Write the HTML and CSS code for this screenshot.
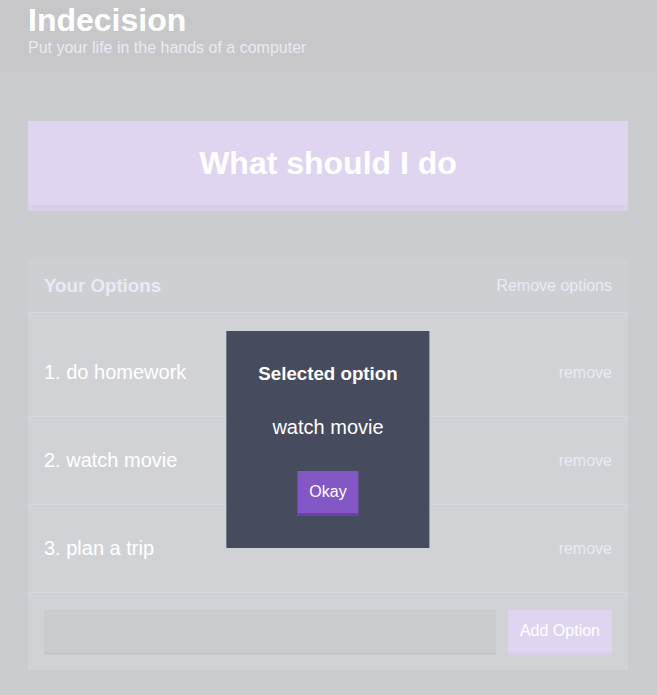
FILE: index.html
```html
<!DOCTYPE html>
<html lang="en">
<head>
<meta charset="utf-8">
<title>Indecision</title>
<link rel="stylesheet" href="styles.css">
</head>
<body>
<header class="header">
  <div class="container">
    <h1 class="header__title">Indecision</h1>
    <h2 class="header__subtitle">Put your life in the hands of a computer</h2>
  </div>
</header>
<main class="container">
  <button class="big-button">What should I do</button>
  <section class="widget">
    <div class="widget-header">
      <h3 class="widget-header__title">Your Options</h3>
      <button class="button--link">Remove options</button>
    </div>
    <div class="options">
      <div class="option">
        <p class="option__text">1. do homework</p>
        <button class="button--link">remove</button>
      </div>
      <div class="option">
        <p class="option__text">2. watch movie</p>
        <button class="button--link">remove</button>
      </div>
      <div class="option">
        <p class="option__text">3. plan a trip</p>
        <button class="button--link">remove</button>
      </div>
    </div>
    <form class="add-option">
      <input class="add-option__input" type="text" name="option">
      <button class="button" type="button">Add Option</button>
    </form>
  </section>
</main>
<div class="overlay">
  <div class="modal">
    <h3 class="modal__title">Selected option</h3>
    <p class="modal__body">watch movie</p>
    <button class="button">Okay</button>
  </div>
</div>
</body>
</html>
```
FILE: styles.css
```css
html, body {
  margin: 0;
  padding: 0;
  overflow: hidden;
}
body {
  background: #333745;
  font-family: "Liberation Sans", Arial, sans-serif;
  color: #ffffff;
  height: 695px;
  padding-right: 1px;
}
button, input {
  font-family: "Liberation Sans", Arial, sans-serif;
}
.container {
  max-width: 600px;
  margin: 0 auto;
}
.header {
  background: #20222b;
  padding: 2px 0 15px;
  margin-bottom: 49px;
}
.header__title {
  font-size: 32px;
  line-height: 37px;
  margin: 0;
  font-weight: bold;
}
.header__subtitle {
  color: #a5afd7;
  font-size: 16px;
  line-height: 18px;
  font-weight: 500;
  margin: 0;
}
.big-button {
  display: block;
  width: 100%;
  background: #8357c5;
  border: none;
  border-bottom: 6px solid #6a42a7;
  color: #ffffff;
  font-size: 32px;
  font-weight: bold;
  line-height: 36px;
  padding: 24px;
  margin: 0 0 48px;
}
.widget {
  background: #464b5e;
}
.widget-header {
  display: flex;
  justify-content: space-between;
  align-items: center;
  background: #3c4251;
  border-bottom: 1px solid #5d6480;
  padding: 17px 16px 16px;
}
.widget-header__title {
  color: #a5afd7;
  font-size: 18.72px;
  line-height: 20px;
  margin: 0;
}
.button--link {
  background: none;
  border: none;
  color: #a5afd7;
  font-size: 16px;
  padding: 0;
}
.options {
  padding-top: 16px;
}
.option {
  display: flex;
  justify-content: space-between;
  align-items: center;
  border-bottom: 1px solid #5d6480;
  padding: 32px 16px;
}
.option__text {
  color: #ffffff;
  font-size: 20px;
  line-height: 23px;
  margin: 0;
}
.add-option {
  display: flex;
  padding: 17px 16px 15px;
  margin: 0;
}
.add-option__input {
  flex-grow: 1;
  background: #333745;
  border: none;
  border-bottom: 3px solid #20222b;
  color: #a5afd7;
  margin: 0 12px 0 0;
  padding: 12px;
  font-size: 16px;
  box-sizing: border-box;
  height: 45px;
}
.button {
  background: #8357c5;
  border: none;
  border-bottom: 3px solid #6a42a7;
  color: #ffffff;
  font-size: 16px;
  line-height: 18px;
  font-weight: 500;
  padding: 12px;
}
.overlay {
  position: fixed;
  inset: 0;
  background: rgba(255, 255, 255, 0.75);
}
.modal {
  position: absolute;
  top: 331px;
  left: calc(50% - 0.5px);
  transform: translateX(-50%);
  background: #464b5e;
  color: #ffffff;
  padding: 32px;
  text-align: center;
  white-space: nowrap;
}
.modal__title {
  font-size: 18.72px;
  line-height: 21px;
  margin: 0 0 32px;
}
.modal__body {
  font-size: 20px;
  line-height: 23px;
  font-weight: 300;
  margin: 0 0 32px;
}
```
